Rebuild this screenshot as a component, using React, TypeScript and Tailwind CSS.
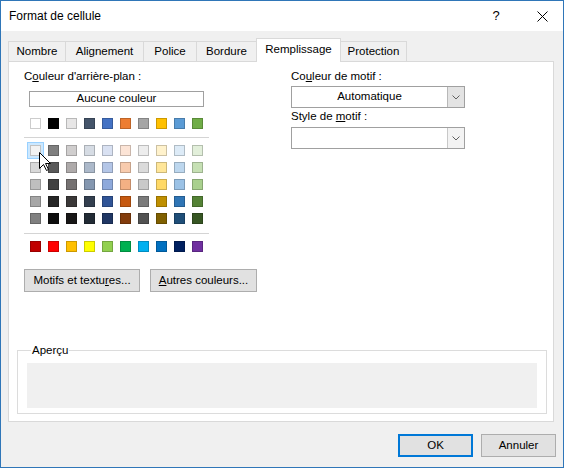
const theme = [
  "bg-[#ffffff]",
  "bg-[#000000]",
  "bg-[#e7e6e6]",
  "bg-[#44546a]",
  "bg-[#4472c4]",
  "bg-[#ed7d31]",
  "bg-[#a5a5a5]",
  "bg-[#ffc000]",
  "bg-[#5b9bd5]",
  "bg-[#70ad47]",
];

const tints = [
  ["bg-[#f2f2f2]", "bg-[#7f7f7f]", "bg-[#d0cece]", "bg-[#d6dce4]", "bg-[#d9e1f2]", "bg-[#fce4d6]", "bg-[#ededed]", "bg-[#fff2cc]", "bg-[#ddebf7]", "bg-[#e2efda]"],
  ["bg-[#d9d9d9]", "bg-[#595959]", "bg-[#aeaaaa]", "bg-[#acb9ca]", "bg-[#b4c6e7]", "bg-[#f8cbad]", "bg-[#dbdbdb]", "bg-[#ffe699]", "bg-[#bdd7ee]", "bg-[#c6e0b4]"],
  ["bg-[#bfbfbf]", "bg-[#404040]", "bg-[#757171]", "bg-[#8497b0]", "bg-[#8ea9db]", "bg-[#f4b084]", "bg-[#c9c9c9]", "bg-[#ffd966]", "bg-[#9bc2e6]", "bg-[#a9d08e]"],
  ["bg-[#a6a6a6]", "bg-[#262626]", "bg-[#3a3838]", "bg-[#333f4f]", "bg-[#305496]", "bg-[#c65911]", "bg-[#7b7b7b]", "bg-[#bf8f00]", "bg-[#2f75b5]", "bg-[#548235]"],
  ["bg-[#808080]", "bg-[#0d0d0d]", "bg-[#171616]", "bg-[#222b35]", "bg-[#203764]", "bg-[#833c0c]", "bg-[#525252]", "bg-[#806000]", "bg-[#1f4e78]", "bg-[#375623]"],
];

const standard = [
  "bg-[#c00000]",
  "bg-[#ff0000]",
  "bg-[#ffc000]",
  "bg-[#ffff00]",
  "bg-[#92d050]",
  "bg-[#00b050]",
  "bg-[#00b0f0]",
  "bg-[#0070c0]",
  "bg-[#002060]",
  "bg-[#7030a0]",
];

const tabs = [
  { label: "Nombre", w: "w-[57px] border-l" },
  { label: "Alignement", w: "w-[78px] border-l" },
  { label: "Police", w: "w-[53px] border-l" },
  { label: "Bordure", w: "w-[60px] border-l" },
  { label: "Remplissage", w: "w-[85px] border-x", active: true },
  { label: "Protection", w: "w-[66px] border-r" },
];

function Swatch({ color, hover }: { color: string; hover?: boolean }) {
  return (
    <div
      className={`h-[11px] w-[11px] border border-black/20 ${color} ${
        hover ? "shadow-[0_0_0_2px_#cce8ff,0_0_0_3px_#99d1ff]" : ""
      }`}
    />
  );
}

function Chevron() {
  return (
    <svg width="8" height="5" viewBox="0 0 8 5">
      <path d="M0.5 0.5L4 4L7.5 0.5" fill="none" stroke="#606060" strokeWidth="1" />
    </svg>
  );
}

export default function App() {
  return (
    <div className="relative h-[468px] w-[564px] bg-white font-['Liberation_Sans',Arial,sans-serif] text-black">
      <div className="flex h-full flex-col border border-[#2f76b8] bg-[#f0f0f0]">
        {/* title bar */}
        <div className="flex h-[30px] shrink-0 items-center bg-white pl-[8px] text-[12px]">
          <span>Format de cellule</span>
          <span className="ml-auto flex w-[50px] items-center justify-center text-[13px]">?</span>
          <span className="flex w-[42px] items-center justify-center">
            <svg width="11" height="11" viewBox="0 0 11 11">
              <path d="M0.5 0.5L10.5 10.5M10.5 0.5L0.5 10.5" stroke="#000" strokeWidth="1" />
            </svg>
          </span>
        </div>

        <div className="flex flex-1 flex-col pl-[7px] pr-[9px] pt-[7px] text-[11.5px]">
          {/* tabs */}
          <div className="relative z-10 flex h-[23px] items-end">
            {tabs.map((t) =>
              t.active ? (
                <div
                  key={t.label}
                  className={`-mb-px flex h-[24px] items-center justify-center border-t border-[#d9d9d9] bg-white pb-[2px] ${t.w}`}
                >
                  {t.label}
                </div>
              ) : (
                <div
                  key={t.label}
                  className={`flex h-[20px] items-center justify-center border-t border-[#d9d9d9] ${t.w}`}
                >
                  {t.label}
                </div>
              )
            )}
          </div>

          {/* panel */}
          <div className="flex h-[361px] shrink-0 flex-col border border-[#d9d9d9] bg-white">
            <div className="flex pl-[15px] pt-[6px]">
              <div className="w-[267px]">
                <div className="leading-[16px]">
                  C<span className="underline">o</span>uleur d'arrière-plan :
                </div>
                <div className="ml-[5px] mt-[7px] flex h-[16px] w-[175px] items-center justify-center border border-[#a0a0a0] bg-white leading-none">
                  Aucune couleur
                </div>
                <div className="ml-[6px] mt-[11px] flex gap-[7px]">
                  {theme.map((c) => (
                    <Swatch key={c} color={c} />
                  ))}
                </div>
                <div className="mt-[8px] h-px w-[185px] bg-[#d4d4d4]" />
                <div className="ml-[6px] mt-[7px] flex flex-col gap-[6px]">
                  {tints.map((row, i) => (
                    <div key={i} className="flex gap-[7px]">
                      {row.map((c, j) => (
                        <Swatch key={c} color={c} hover={i === 0 && j === 0} />
                      ))}
                    </div>
                  ))}
                </div>
                <div className="mt-[9px] h-px w-[185px] bg-[#d4d4d4]" />
                <div className="ml-[6px] mt-[7px] flex gap-[7px]">
                  {standard.map((c) => (
                    <Swatch key={c} color={c} />
                  ))}
                </div>
                <div className="mt-[17px] flex gap-[10px]">
                  <div className="flex h-[23px] w-[116px] items-center justify-center border border-[#adadad] bg-[#e1e1e1]">
                    Motifs et textu<span className="underline">r</span>es...
                  </div>
                  <div className="flex h-[23px] w-[107px] items-center justify-center border border-[#adadad] bg-[#e1e1e1]">
                    <span className="underline">A</span>utres couleurs...
                  </div>
                </div>
              </div>

              <div className="w-[174px]">
                <div className="leading-[16px]">
                  Co<span className="underline">u</span>leur de motif :
                </div>
                <div className="mt-[2px] flex h-[22px] border border-[#a0a0a0] bg-white">
                  <div className="flex flex-1 items-center justify-center">Automatique</div>
                  <div className="flex w-[17px] items-center justify-center border-l border-[#b8b8b8] bg-[#e3e3e3]">
                    <Chevron />
                  </div>
                </div>
                <div className="leading-[16px]">
                  Style de <span className="underline">m</span>otif :
                </div>
                <div className="mt-[3px] flex h-[22px] border border-[#a0a0a0] bg-white">
                  <div className="flex-1" />
                  <div className="flex w-[17px] items-center justify-center border-l border-[#c8c8c8] bg-[#f3f3f3]">
                    <Chevron />
                  </div>
                </div>
              </div>
            </div>

            <fieldset className="mb-[7px] ml-[8px] mt-auto w-[530px] border border-[#dcdcdc] pb-[5px] pl-[9px]">
              <legend className="ml-[4px] px-px leading-[16px]">Aperçu</legend>
              <div className="mt-[5px] h-[45px] w-[510px] bg-[#f0f0f0]" />
            </fieldset>
          </div>

          {/* dialog buttons */}
          <div className="-mr-[2px] mt-[12px] flex justify-end gap-[8px]">
            <div className="flex h-[23px] w-[75px] items-center justify-center border-2 border-[#0078d7] bg-[#e1e1e1]">
              OK
            </div>
            <div className="flex h-[23px] w-[75px] items-center justify-center border border-[#adadad] bg-[#e1e1e1]">
              Annuler
            </div>
          </div>
        </div>
      </div>

      {/* mouse pointer */}
      <svg className="absolute left-[39px] top-[152px]" width="13" height="20" viewBox="0 0 13 20">
        <path
          d="M0.5 0.5L0.5 16.5L4.5 12.5L7.5 18.5L9.5 17.5L6.5 11.5L11.5 11.5Z"
          fill="#fff"
          stroke="#000"
          strokeWidth="1"
          strokeLinejoin="miter"
        />
      </svg>
    </div>
  );
}
